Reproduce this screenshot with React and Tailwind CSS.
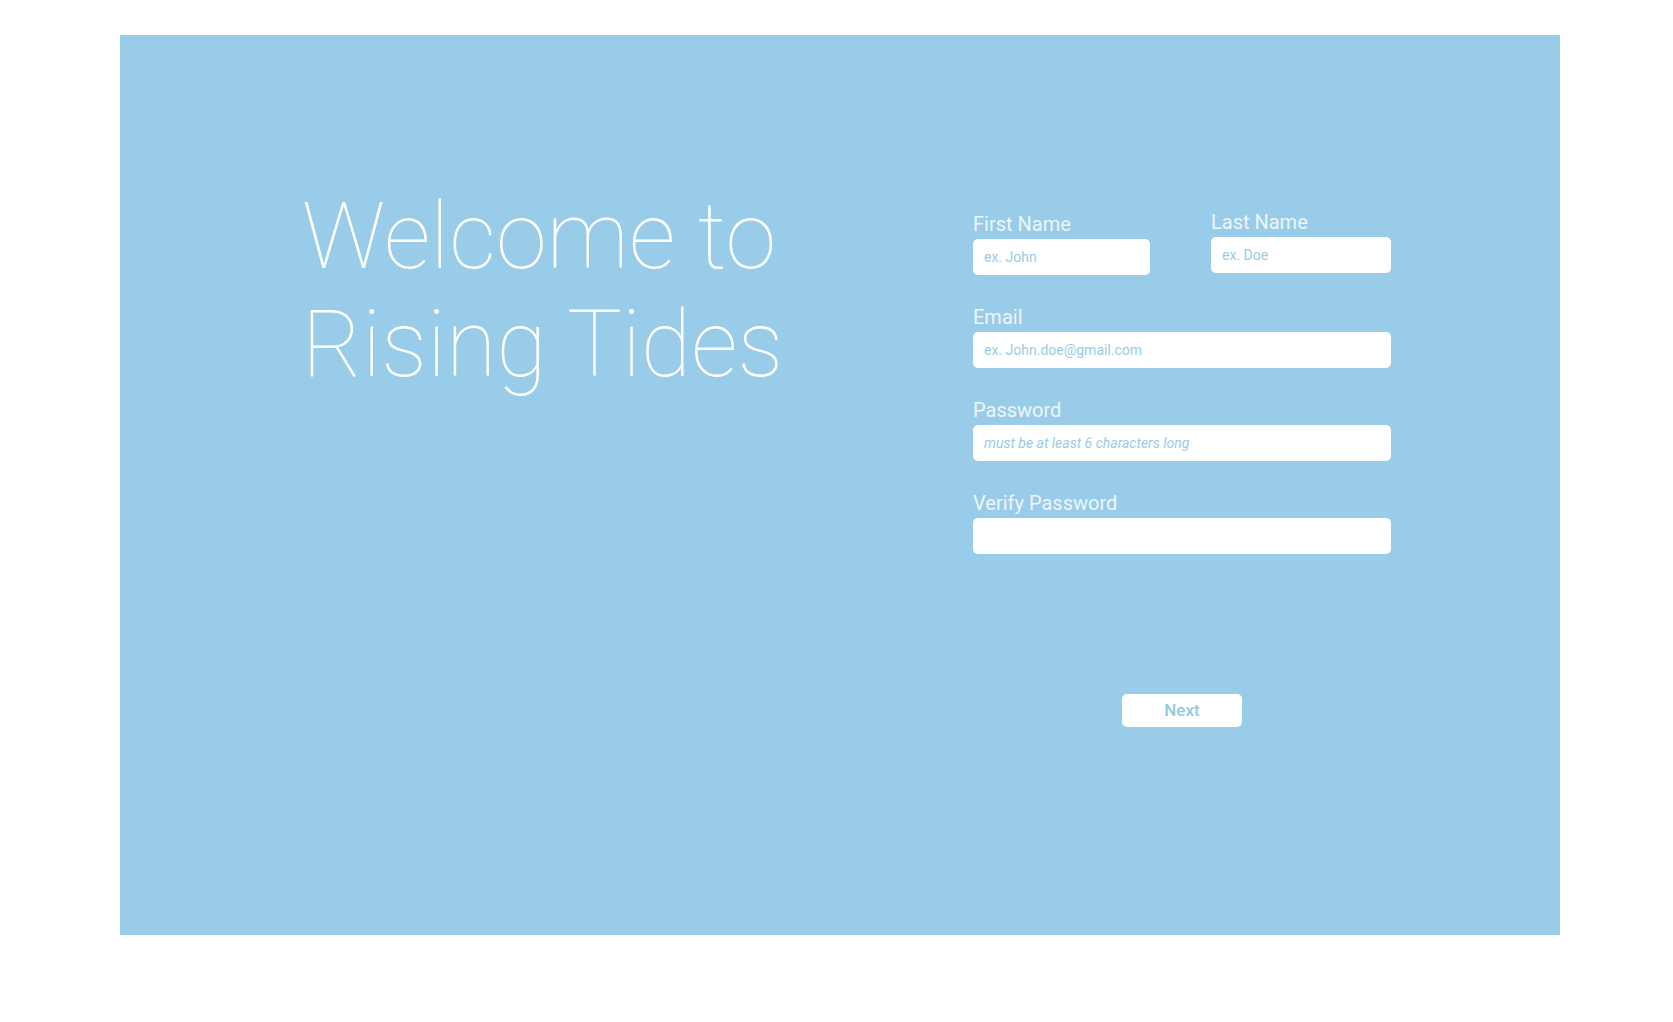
import React from "react";

const font = { fontFamily: "Roboto, 'Noto Sans', sans-serif" };

function Field({ label, placeholder, italic, className = "" }) {
  return (
    <div className={"flex flex-col " + className}>
      <label className="text-[20px] leading-[22px] text-[#eef5fa] mb-[4px]">{label}</label>
      <input
        className={
          "h-[36px] w-full rounded-[5px] bg-white pl-[11px] pr-[10px] text-[14px] text-[#5fa9d2] outline-none placeholder:text-[#98cce8] " +
          (italic ? "placeholder:italic" : "")
        }
        placeholder={placeholder}
      />
    </div>
  );
}

export default function App() {
  return (
    <div className="min-h-[1022px] bg-white pt-[35px]" style={font}>
      <div className="ml-[120px] flex h-[900px] w-[1440px] items-start bg-[#98cce8] pl-[182px]">
        <div className="mt-[148px] w-[671px] shrink-0">
          <h1 className="text-[92px] font-thin leading-[108px] text-white">
            Welcome to
            <br />
            Rising Tides
          </h1>
        </div>
        <div className="mt-[177px] flex w-[418px] shrink-0 flex-col">
          <div className="flex gap-[61px]">
            <Field label="First Name" placeholder="ex. John" className="mt-[1px] w-[177px]" />
            <Field label="Last Name" placeholder="ex. Doe" className="-mt-[1px] w-[180px]" />
          </div>
          <Field label="Email" placeholder="ex. John.doe@gmail.com" className="mt-[31px]" />
          <Field label="Password" placeholder="must be at least 6 characters long" italic className="mt-[31px]" />
          <Field label="Verify Password" placeholder="" className="mt-[31px]" />
          <div className="mt-[140px] flex justify-center">
            <button className="h-[33px] w-[120px] rounded-[5px] bg-white text-[17px] font-medium text-[#92c9e7]">
              Next
            </button>
          </div>
        </div>
      </div>
    </div>
  );
}
